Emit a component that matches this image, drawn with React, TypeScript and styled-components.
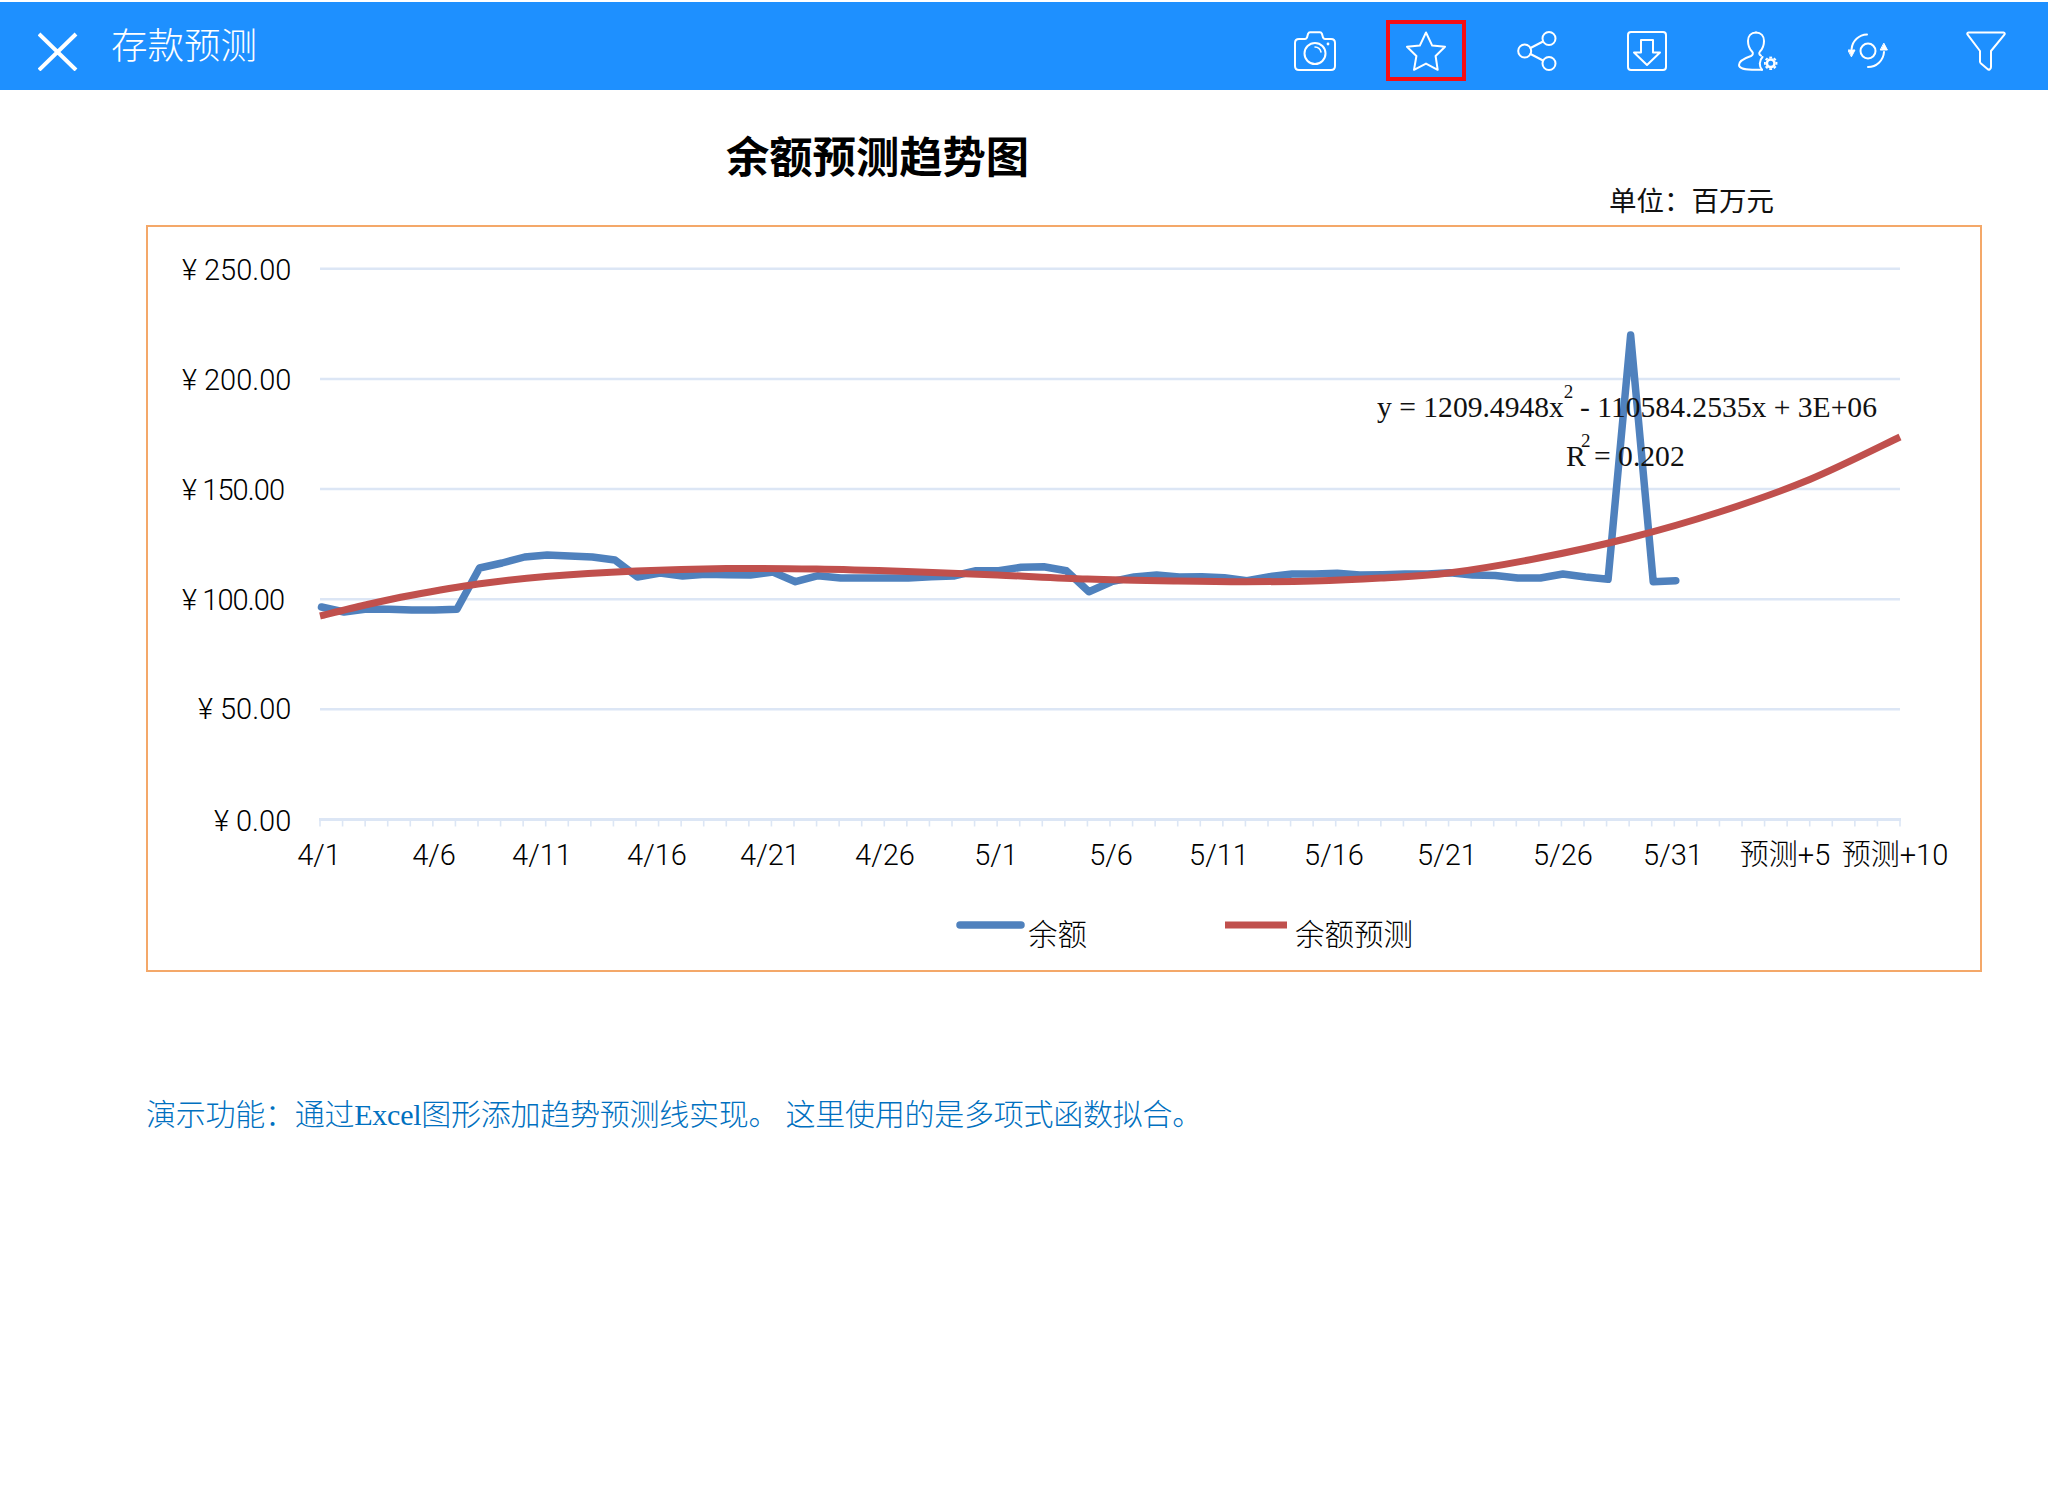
import React from 'react'
import styled, { createGlobalStyle } from 'styled-components'

const SANS = `"Liberation Sans", "Noto Sans CJK SC", sans-serif`
const LIGHT_SANS = `Roboto, "Noto Sans CJK SC", sans-serif`
const SERIF = `"Liberation Serif", "Noto Sans CJK SC", serif`

const GlobalStyle = createGlobalStyle`
    html, body {
        margin: 0;
        padding: 0;
        background: #fff;
    }
    body {
        font-family: ${SANS};
    }
`

const Page = styled.div`
    width: 2048px;
    height: 1498px;
    padding-top: 2px;
    box-sizing: border-box;
    overflow: hidden;
`

const Header = styled.header`
    display: flex;
    height: 88px;
    background: #1e90ff;
    color: #fff;
`

const CloseButton = styled.div`
    display: flex;
    width: 40px;
    margin: 29px 0 0 38px;
`

const HeaderTitle = styled.h1`
    margin: 0 0 0 33px;
    font-family: "Noto Sans CJK SC", sans-serif;
    font-size: 36.5px;
    font-weight: 300;
    line-height: 87px;
    transform: translateY(-2px);
`

const Toolbar = styled.div`
    display: flex;
    align-items: flex-start;
    gap: 30.6px;
    margin-left: auto;
    padding: 18px 22px 0 0;
`

const ToolButton = styled.div<{ $active?: boolean; $shift?: number }>`
    display: flex;
    align-items: center;
    justify-content: center;
    width: 80px;
    height: 61px;
    box-sizing: border-box;
    border: 4px solid ${p => (p.$active ? '#f50d12' : 'transparent')};
    margin-left: ${p => p.$shift ?? 0}px;
`

const Main = styled.main`
    padding: 46px 66px 0 146px;
`

const ChartTitle = styled.h2`
    margin: 0 0 0 580px;
    font-size: 43.3px;
    font-weight: 700;
    line-height: 44px;
    color: #000;
`

const UnitRow = styled.div`
    margin: 8px 0 9px 1463px;
    font-size: 27.5px;
    font-weight: 400;
    line-height: 28px;
    color: #111;
`

const ChartFrame = styled.div`
    width: 1836px;
    height: 747px;
    box-sizing: border-box;
    border: 2px solid #f4a869;
`

const ChartSvg = styled.svg`
    display: block;
`

const AxisText = styled.text`
    font-family: ${LIGHT_SANS};
    font-size: 29px;
    font-weight: 300;
    fill: #000;
`

const LegendText = styled.text`
    font-family: ${LIGHT_SANS};
    font-size: 29.5px;
    font-weight: 300;
    fill: #000;
`

const EquationText = styled.text`
    font-family: "Liberation Serif", serif;
    font-size: 29.6px;
    fill: #111;
`

const Note = styled.p`
    margin: 123px 0 0;
    font-family: ${SERIF};
    font-size: 30px;
    font-weight: 300;
    letter-spacing: -0.25px;
    line-height: 40px;
    color: #0070c0;
    white-space: pre;
`

const iconProps = {
    fill: 'none',
    stroke: '#fff',
    strokeWidth: 2,
    strokeLinecap: 'round' as const,
    strokeLinejoin: 'round' as const,
}

const CloseIcon = () => (
    <svg width="40" height="40" viewBox="0 0 40 40">
        <path d="M1 3 L38 39 M38 3 L1 39" stroke="#fff" strokeWidth="4" fill="none" />
    </svg>
)

const CameraIcon = () => (
    <svg width="42" height="40" viewBox="0 0 42 40" {...iconProps}>
        <path d="M5 8 H11 C12 8 12.5 7.5 13 6.5 L14 3 C14.5 1.8 15 1.2 16 1.2 H26 C27 1.2 27.5 1.8 28 3 L29 6.5 C29.5 7.5 30 8 31 8 H37 C39.5 8 41 9.5 41 12 V35 C41 37.5 39.5 39 37 39 H5 C2.5 39 1 37.5 1 35 V12 C1 9.5 2.5 8 5 8 Z" />
        <circle cx="21" cy="22.5" r="10.5" />
        <path d="M21 16 A6.5 6.5 0 0 1 27 21" strokeWidth="1.5" />
        <circle cx="34" cy="13" r="1.4" fill="#fff" stroke="none" />
    </svg>
)

const StarIcon = () => (
    <svg width="40" height="40" viewBox="-1 0 40 40" {...iconProps}>
        <path d="M19 1.5 L25.2 14.6 L38 15.7 L28.6 25 L30.7 38.8 L19 32.6 L7 38.8 L9.4 25 L0 15.7 L12.8 14.6 Z" />
    </svg>
)

const ShareIcon = () => (
    <svg width="40" height="40" viewBox="0 0 40 40" {...iconProps}>
        <circle cx="7.7" cy="20" r="6.5" />
        <circle cx="32" cy="7.5" r="6.5" />
        <circle cx="32" cy="32.5" r="6.5" />
        <path d="M13.5 17 L26 10.5 M13.5 23 L26 29.5" />
    </svg>
)

const DownloadIcon = () => (
    <svg width="40" height="40" viewBox="0 0 40 40" {...iconProps}>
        <rect x="1" y="1" width="38" height="38" rx="3" />
        <path d="M14 9 H26 V21.5 H33 L20 34 L7 21.5 H14 Z" />
    </svg>
)

const gearAngles = [0, 45, 90, 135, 180, 225, 270, 315]

const UserGearIcon = () => (
    <svg width="40" height="40" viewBox="0 0 40 40" {...iconProps}>
        <path d="M18 1.5 C13 1.5 10 5 10 10 C10 15 12 18.5 14 20.5 C15.5 22 15 24 13 25 C7 27 1 30 1 34 C1 37.5 6 38.7 18 38.7 H24" />
        <path d="M18 1.5 C23 1.5 26 5 26 10 C26 15 24 18.5 22 20.5 C20.8 22 21 23.6 23 24.6" />
        <path d="M24.5 26 C21 29.5 21 35.5 24 38.7" />
        <circle cx="32.7" cy="32.3" r="3.8" strokeWidth="2.6" />
        {gearAngles.map(a => (
            <path key={a} d="M32.7 25.6 V27.4" strokeWidth="2.8" strokeLinecap="butt" transform={`rotate(${a} 32.7 32.3)`} />
        ))}
    </svg>
)

const SyncIcon = () => (
    <svg width="40" height="40" viewBox="0 0 40 40" {...iconProps}>
        <circle cx="20" cy="20" r="7.5" />
        <path d="M19 3.5 A16 16 0 0 0 3.6 18" />
        <path d="M20 36 A16 16 0 0 0 36 21" />
        <path d="M0.2 19 H7 L3.6 25.5 Z" fill="#fff" strokeWidth="1" />
        <path d="M32.6 19 H39.4 L36 12.5 Z" fill="#fff" strokeWidth="1" />
    </svg>
)

const FilterIcon = () => (
    <svg width="40" height="40" viewBox="0 0 40 40" {...iconProps}>
        <path d="M2.5 1.5 H37.5 C39 1.5 39 3 38.2 3.8 L25 20 V36 C25 38 23 39.5 21.5 38 L15 32.5 C14.3 32 14 31.5 14 30.5 V20 L1.8 3.8 C1 3 1 1.5 2.5 1.5 Z" />
    </svg>
)

const AXIS_LEFT = 320
const AXIS_RIGHT = 1900
const STEP = (AXIS_RIGHT - AXIS_LEFT) / 70
const xAt = (i: number) => AXIS_LEFT + i * STEP

// pixel heights read off the reference, one per day from 4/1 to 5/31
const balance = [
    607, 612, 609, 609.3, 610, 610, 609.3, 568, 563, 557, 555, 556, 557, 560, 577, 573, 576, 574.3, 574.7, 575, 572,
    581.7, 575.7, 578, 578, 578, 578, 576.7, 576, 570.7, 570.7, 567.3, 566.7, 570.7, 591.7, 581.7, 577, 575, 577,
    576.7, 577.7, 580.7, 576.7, 574, 574, 573.3, 575, 574.7, 574, 574, 572.7, 575, 575.5, 578, 578, 574, 577, 579.3,
    335, 581.7, 580.7,
]

const trend: [number, number][] = [
    [0, 616], [2, 605], [4, 595.5], [7, 584], [10, 576.5], [14, 571], [18, 568.5], [22, 569], [26, 571.5], [30, 575],
    [34, 579], [38, 581], [41, 581.7], [44, 581], [47, 578], [50, 573], [54, 558], [58, 538], [62, 512], [66, 479.5],
    [70, 437],
]

const smoothPath = (pts: [number, number][]) => {
    const p = pts.map(([i, y]) => [xAt(i), y])
    let d = `M${p[0][0]} ${p[0][1]}`
    for (let k = 0; k < p.length - 1; k++) {
        const a = p[k - 1] ?? p[k]
        const b = p[k]
        const c = p[k + 1]
        const e = p[k + 2] ?? c
        d += ` C${b[0] + (c[0] - a[0]) / 6} ${b[1] + (c[1] - a[1]) / 6} ${c[0] - (e[0] - b[0]) / 6} ${c[1] - (e[1] - b[1]) / 6} ${c[0]} ${c[1]}`
    }
    return d
}

const gridLines = [268.8, 378.9, 489, 599.2, 709.3]
const AXIS_Y = 819.5

const yLabels = [
    { text: '¥ 250.00', x: 182, y: 280 },
    { text: '¥ 200.00', x: 182, y: 389.5 },
    { text: '¥ 150.00', x: 182, y: 499.5, tight: true },
    { text: '¥ 100.00', x: 182, y: 609.5, tight: true },
    { text: '¥ 50.00', x: 198, y: 718.5 },
    { text: '¥ 0.00', x: 214, y: 831 },
]

const xLabels = [
    { text: '4/1', x: 319 },
    { text: '4/6', x: 434 },
    { text: '4/11', x: 542 },
    { text: '4/16', x: 657 },
    { text: '4/21', x: 770 },
    { text: '4/26', x: 885 },
    { text: '5/1', x: 996 },
    { text: '5/6', x: 1111 },
    { text: '5/11', x: 1219 },
    { text: '5/16', x: 1334 },
    { text: '5/21', x: 1447 },
    { text: '5/26', x: 1563 },
    { text: '5/31', x: 1673 },
    { text: '预测+5', x: 1785 },
    { text: '预测+10', x: 1895 },
]

const Chart = () => (
    <ChartSvg width="1832" height="743" viewBox="148 227 1832 743">
        {gridLines.map(y => (
            <line key={y} x1={AXIS_LEFT} x2={AXIS_RIGHT} y1={y} y2={y} stroke="#dce6f5" strokeWidth="2.5" />
        ))}
        <line x1={AXIS_LEFT - 1} x2={AXIS_RIGHT + 1} y1={AXIS_Y} y2={AXIS_Y} stroke="#dce6f5" strokeWidth="3" />
        {Array.from({ length: 71 }, (_, i) => (
            <line key={i} x1={xAt(i)} x2={xAt(i)} y1={AXIS_Y} y2={AXIS_Y + 7} stroke="#dce6f5" strokeWidth="1.6" />
        ))}

        {yLabels.map(l => (
            <AxisText key={l.text} x={l.x} y={l.y} letterSpacing={l.tight ? -0.9 : 0}>
                {l.text}
            </AxisText>
        ))}
        {xLabels.map(l => (
            <AxisText key={l.text} x={l.x} y={865} textAnchor="middle">
                {l.text}
            </AxisText>
        ))}

        <polyline
            points={balance.map((y, i) => `${xAt(i) + 1.5},${y}`).join(' ')}
            fill="none"
            stroke="#4f81bd"
            strokeWidth="7.5"
            strokeLinecap="round"
            strokeLinejoin="round"
        />

        <EquationText x="1377" y="417">
            y = 1209.4948x
            <tspan fontSize="19" dy="-19">2</tspan>
            <tspan x="1580" dy="19">- 110584.2535x + 3E+06</tspan>
        </EquationText>
        <EquationText x="1566" y="465.5">
            R
            <tspan fontSize="19" x="1581" dy="-19">2</tspan>
            <tspan x="1594" dy="19">= 0.202</tspan>
        </EquationText>

        <path d={smoothPath(trend)} fill="none" stroke="#c0504d" strokeWidth="7" />

        <line x1="960" x2="1021" y1="925" y2="925" stroke="#4f81bd" strokeWidth="7.5" strokeLinecap="round" />
        <LegendText x="1028" y="945">余额</LegendText>
        <line x1="1225" x2="1287" y1="925" y2="925" stroke="#c0504d" strokeWidth="7" />
        <LegendText x="1295" y="945">余额预测</LegendText>
    </ChartSvg>
)

export default function App() {
    return (
        <Page>
            <GlobalStyle />
            <Header>
                <CloseButton>
                    <CloseIcon />
                </CloseButton>
                <HeaderTitle>存款预测</HeaderTitle>
                <Toolbar>
                    <ToolButton><CameraIcon /></ToolButton>
                    <ToolButton $active><StarIcon /></ToolButton>
                    <ToolButton><ShareIcon /></ToolButton>
                    <ToolButton><DownloadIcon /></ToolButton>
                    <ToolButton><UserGearIcon /></ToolButton>
                    <ToolButton><SyncIcon /></ToolButton>
                    <ToolButton $shift={7}><FilterIcon /></ToolButton>
                </Toolbar>
            </Header>
            <Main>
                <ChartTitle>余额预测趋势图</ChartTitle>
                <UnitRow>单位：百万元</UnitRow>
                <ChartFrame>
                    <Chart />
                </ChartFrame>
                <Note>演示功能：通过Excel图形添加趋势预测线实现。 这里使用的是多项式函数拟合。</Note>
            </Main>
        </Page>
    )
}
